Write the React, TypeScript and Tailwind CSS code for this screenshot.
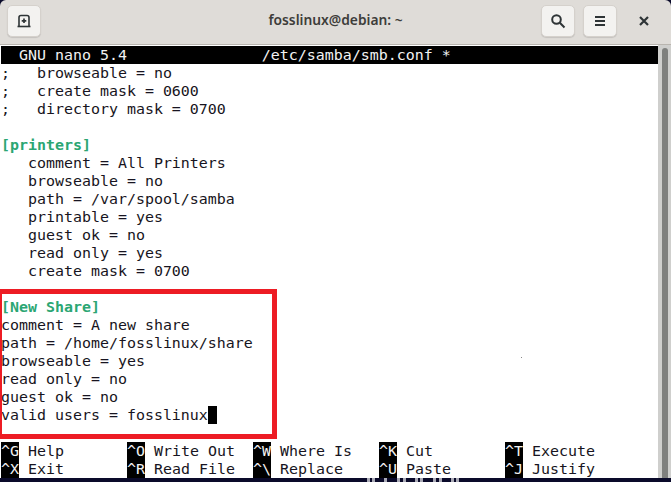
const lines: { text: string; green?: boolean }[] = [
  { text: ";   browseable = no" },
  { text: ";   create mask = 0600" },
  { text: ";   directory mask = 0700" },
  { text: "" },
  { text: "[printers]", green: true },
  { text: "   comment = All Printers" },
  { text: "   browseable = no" },
  { text: "   path = /var/spool/samba" },
  { text: "   printable = yes" },
  { text: "   guest ok = no" },
  { text: "   read only = yes" },
  { text: "   create mask = 0700" },
  { text: "" },
  { text: "[New Share]", green: true },
  { text: "comment = A new share" },
  { text: "path = /home/fosslinux/share" },
  { text: "browseable = yes" },
  { text: "read only = no" },
  { text: "guest ok = no" },
];

const shortcuts = [
  [
    ["^G", "Help"],
    ["^O", "Write Out"],
    ["^W", "Where Is"],
    ["^K", "Cut"],
    ["^T", "Execute"],
  ],
  [
    ["^X", "Exit"],
    ["^R", "Read File"],
    ["^\\", "Replace"],
    ["^U", "Paste"],
    ["^J", "Justify"],
  ],
];

// bits of the wallpaper lettering that show under the window
const wallpaperBits = [0, 5, 17, 30, 36, 48, 53, 66, 72, 84, 89];

function HeaderButton({ children }: { children: React.ReactNode }) {
  return (
    <div className="flex h-[32px] w-[34px] items-center justify-center rounded-[5px] border border-[#d5d1cc] bg-[#f3f2f0] shadow-[0_1px_1px_rgba(0,0,0,0.12)]">
      {children}
    </div>
  );
}

export default function App() {
  return (
    <div className="flex h-[482px] w-[671px] flex-col overflow-hidden bg-[#0a0a2a]">
      <div className="grid h-[45px] shrink-0 grid-cols-[1fr_auto_1fr] items-center rounded-t-[6px] border-b border-[#b9b5af] bg-[#dfdcd8] pb-[3px]">
        <div className="pl-[7px]">
          <HeaderButton>
            <svg width="16" height="16" viewBox="0 0 16 16" fill="none" stroke="#2e3436">
              <path d="M3 13V4.5Q3 2.5 5 2.5H11Q13 2.5 13 4.5V13" strokeWidth="1.6" />
              <path d="M1.5 13.5H14.5" strokeWidth="1.6" />
              <path d="M8 5.5V10M5.7 7.8H10.3" strokeWidth="1.7" />
            </svg>
          </HeaderButton>
        </div>
        <div className="font-['Noto_Sans'] text-[13.8px] font-semibold text-[#3d3d3a]">fosslinux@debian: ~</div>
        <div className="flex items-center justify-end">
          <HeaderButton>
            <svg width="16" height="16" viewBox="0 0 16 16" fill="none" stroke="#2e3436" strokeWidth="2">
              <circle cx="6.5" cy="6.5" r="4.3" />
              <path d="M9.8 9.8L14.5 14.5" />
            </svg>
          </HeaderButton>
          <div className="ml-[8px]">
            <HeaderButton>
              <svg width="16" height="16" viewBox="0 0 16 16" fill="#2e3436">
                <rect x="3" y="3" width="10" height="2" />
                <rect x="3" y="7" width="10" height="2" />
                <rect x="3" y="11" width="10" height="2" />
              </svg>
            </HeaderButton>
          </div>
          <div className="flex w-[54px] justify-center">
            <svg width="10" height="10" viewBox="0 0 10 10" stroke="#2e3436" strokeWidth="2.2">
              <path d="M1 1L9 9M9 1L1 9" />
            </svg>
          </div>
        </div>
      </div>

      <div className="flex h-[433px] shrink-0">
        <div className="relative flex-1 overflow-hidden bg-white pt-px pl-px font-['DejaVu_Sans_Mono'] text-[14.95px] leading-[18px] whitespace-pre text-[#171421]">
          <div className="h-[18px] bg-black text-[#f2f2f2]">{"  GNU nano 5.4               /etc/samba/smb.conf *"}</div>
          {lines.map((line, i) => (
            <div key={i} className={line.green ? "h-[18px] font-bold text-[#2ba673]" : "h-[18px]"}>
              {line.text}
            </div>
          ))}
          <div className="flex h-[18px]">
            valid users = fosslinux
            <span className="h-[18px] w-[9px] bg-black" />
          </div>
          <div className="h-[18px]" />
          {shortcuts.map((row, i) => (
            <div key={i} className="flex h-[18px]">
              {row.map(([key, label]) => (
                <div key={key} className="flex w-[126px]">
                  <span className="bg-black text-[#f2f2f2]">{key}</span>
                  <span className="ml-[9px]">{label}</span>
                </div>
              ))}
            </div>
          ))}
          <div className="absolute top-[244px] -left-[3px] h-[150px] w-[280px] border-[5px] border-[#ed1c24]" />
          <div className="absolute top-[312px] left-[521px] h-px w-px bg-[#888888]" />
        </div>
        <div className="flex w-[13px] shrink-0 justify-center bg-[#cfcfcd] pt-[3px]">
          <div className="h-[430px] w-[6px] rounded-t-[3px] bg-[#7f807e]" />
        </div>
      </div>

      <div className="h-[4px] pl-[367px]">
        <svg width="94" height="4" viewBox="0 0 94 4" className="block" fill="#a9a9b5">
          {wallpaperBits.map((x) => (
            <rect key={x} x={x} y="0" width="3" height="4" />
          ))}
        </svg>
      </div>
    </div>
  );
}
